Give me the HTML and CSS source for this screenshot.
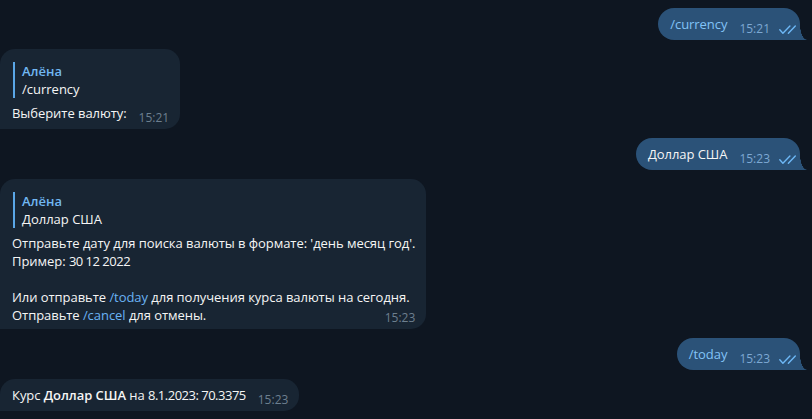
FILE: index.html
```html
<!DOCTYPE html>
<html lang="ru">
<head>
<meta charset="utf-8">
<title>Chat</title>
<link rel="stylesheet" href="styles.css">
</head>
<body>
<div class="chat">
  <div class="row row-out">
    <div class="bubble bubble-out">
      <span class="text link-out">/currency</span>
      <span class="meta"><span class="time">15:21</span><svg class="checks" viewBox="0 0 17 9" width="17" height="9"><path d="M0.8 4.8 L3.9 8.2 L10.9 0.9 M9.4 8.2 L16.3 0.9" fill="none" stroke="#6db7f5" stroke-width="1.4" stroke-linecap="round" stroke-linejoin="round"/></svg></span>
    </div>
  </div>

  <div class="row row-in">
    <div class="bubble bubble-in stack">
      <div class="reply">
        <div class="reply-name">Алёна</div>
        <div class="reply-text">/currency</div>
      </div>
      <div class="line">
        <span class="text">Выберите валюту:</span>
        <span class="meta meta-in"><span class="time">15:21</span></span>
      </div>
    </div>
  </div>

  <div class="row row-out">
    <div class="bubble bubble-out">
      <span class="text">Доллар США</span>
      <span class="meta"><span class="time">15:23</span><svg class="checks" viewBox="0 0 17 9" width="17" height="9"><path d="M0.8 4.8 L3.9 8.2 L10.9 0.9 M9.4 8.2 L16.3 0.9" fill="none" stroke="#6db7f5" stroke-width="1.4" stroke-linecap="round" stroke-linejoin="round"/></svg></span>
    </div>
  </div>

  <div class="row row-in">
    <div class="bubble bubble-in stack">
      <div class="reply">
        <div class="reply-name">Алёна</div>
        <div class="reply-text">Доллар США</div>
      </div>
      <div class="body">
        <p class="para">Отправьте дату для поиска валюты в формате: 'день месяц год'.<br>Пример: <span class="num">30 12 2022</span></p>
        <p class="para">Или отправьте <span class="link">/today</span> для получения курса валюты на сегодня.<br>Отправьте <span class="link">/cancel</span> для отмены.</p>
      </div>
      <span class="meta meta-in meta-float"><span class="time">15:23</span></span>
    </div>
  </div>

  <div class="row row-out">
    <div class="bubble bubble-out">
      <span class="text link-out">/today</span>
      <span class="meta"><span class="time">15:23</span><svg class="checks" viewBox="0 0 17 9" width="17" height="9"><path d="M0.8 4.8 L3.9 8.2 L10.9 0.9 M9.4 8.2 L16.3 0.9" fill="none" stroke="#6db7f5" stroke-width="1.4" stroke-linecap="round" stroke-linejoin="round"/></svg></span>
    </div>
  </div>

  <div class="row row-in">
    <div class="bubble bubble-in">
      <span class="text">Курс <b>Доллар США</b> на <span class="num">8.1.2023: 70.3375</span></span>
      <span class="meta meta-in"><span class="time">15:23</span></span>
    </div>
  </div>
</div>
</body>
</html>
```

FILE: styles.css
```css
html, body {
  margin: 0;
  padding: 0;
  background: #0e1621;
  height: 100%;
  overflow: hidden;
}

body {
  font-family: "Open Sans", "Noto Sans", sans-serif;
  font-size: 13px;
  line-height: 18px;
  color: #f5f5f5;
}

.chat {
  display: flex;
  flex-direction: column;
  gap: 9px;
  padding-top: 8px;
}

.row {
  display: flex;
}

.row-out {
  justify-content: flex-end;
  padding-right: 12px;
}

.row-in {
  justify-content: flex-start;
}

.bubble {
  position: relative;
  display: flex;
  align-items: flex-end;
  padding: 7px 11px 7px 12px;
}

.bubble-out {
  background: #2b5278;
  border-radius: 16px 16px 0 16px;
  padding: 7px 4px 7px 12px;
}

.bubble-out::after {
  content: "";
  position: absolute;
  right: -7px;
  bottom: 0;
  width: 7px;
  height: 15px;
  background: radial-gradient(7px 15px at 100% 0, transparent 96%, #2b5278 100%);
}

.bubble-in {
  background: #182533;
  border-radius: 15px 15px 15px 0;
}

.stack {
  flex-direction: column;
  align-items: stretch;
  padding-top: 13px;
  padding-bottom: 7px;
}

.line {
  display: flex;
  align-items: flex-end;
}

.text {
  white-space: nowrap;
  letter-spacing: -0.05px;
}

.num {
  letter-spacing: -0.5px;
}

.link-out {
  color: #82c3f7;
}

.link {
  color: #6ab3f3;
}

.meta {
  display: flex;
  align-items: center;
  margin-left: 12px;
  margin-bottom: -2px;
  font-size: 12px;
  line-height: 12px;
  color: #7da8d3;
}

.meta-in {
  color: #6d7f8f;
}

.meta-float {
  align-self: flex-end;
  margin-top: -12px;
}

.time {
  white-space: nowrap;
}

.checks {
  display: block;
  margin-left: 9px;
}

.reply {
  border-left: 2px solid #5aa6e6;
  padding-left: 7px;
  margin-left: 1px;
  margin-bottom: 6px;
}

.reply-name {
  color: #71b8f2;
  font-weight: 600;
}

.reply-text {
  color: #f5f5f5;
}

.body {
  white-space: nowrap;
  letter-spacing: -0.05px;
}

.para {
  margin: 0;
}

.para + .para {
  margin-top: 18px;
}

b {
  font-weight: 600;
}
```
